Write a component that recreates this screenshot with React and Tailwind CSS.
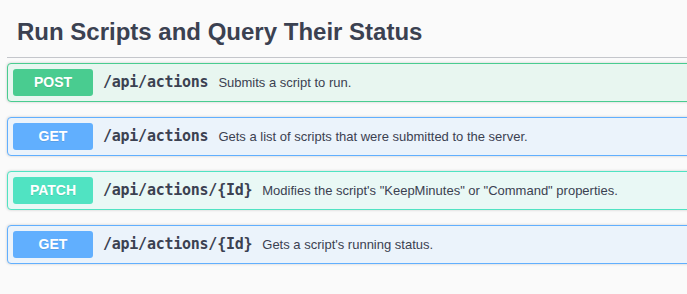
import React from "react";

const ops = [
  { m: "POST", path: "/api/actions", desc: "Submits a script to run.", c: "post" },
  { m: "GET", path: "/api/actions", desc: "Gets a list of scripts that were submitted to the server.", c: "get" },
  { m: "PATCH", path: "/api/actions/{Id}", desc: "Modifies the script's \"KeepMinutes\" or \"Command\" properties.", c: "patch" },
  { m: "GET", path: "/api/actions/{Id}", desc: "Gets a script's running status.", c: "get" },
];

const styles = {
  post: { block: "border-[#49cc90] bg-[#e8f6f0]", badge: "bg-[#49cc90]" },
  get: { block: "border-[#61affe] bg-[#ebf3fb]", badge: "bg-[#61affe]" },
  patch: { block: "border-[#50e3c2] bg-[#e9f8f5]", badge: "bg-[#50e3c2]" },
};

export default function App() {
  return (
    <div className="w-[687px] h-[294px] overflow-hidden bg-[#fafafa] font-['Liberation_Sans',Arial,sans-serif] text-[#3b4151]">
      <div className="w-[760px] pl-[7px] pt-[8px]">
        <h4 className="m-0 mb-[5px] pl-[10px] pr-5 pt-[10px] pb-[11px] text-[24px] font-bold leading-[28px] border-b border-[#c4c6cb]">
          Run Scripts and Query Their Status
        </h4>
        <div className="flex flex-col gap-[15px]">
          {ops.map((o, i) => (
            <div
              key={i}
              className={`flex items-center p-[5px] border rounded-[4px] shadow-[0_0_3px_rgba(0,0,0,0.19)] ${styles[o.c].block}`}
            >
              <span
                className={`w-[80px] h-[27px] flex items-center justify-center rounded-[3px] text-white text-[14px] font-bold [text-shadow:0_1px_0_rgba(0,0,0,0.1)] ${styles[o.c].badge}`}
              >
                {o.m}
              </span>
              <span className="px-[10px] font-['DejaVu_Sans_Mono',monospace] font-bold text-[15px] tracking-[-0.25px] text-[#3b4151]">
                {o.path}
              </span>
              <span className="text-[13px] text-[#3b4151]">{o.desc}</span>
            </div>
          ))}
        </div>
      </div>
    </div>
  );
}
